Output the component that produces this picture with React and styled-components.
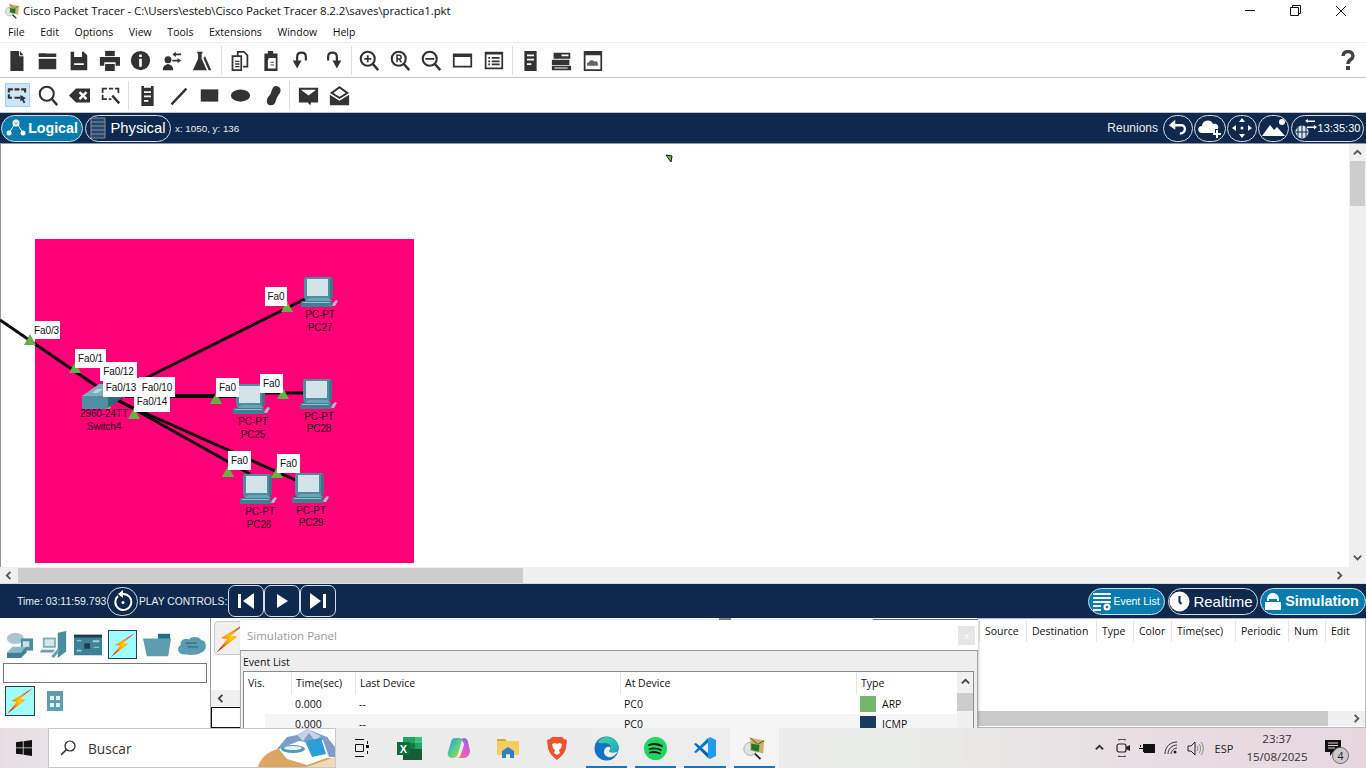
import React from "react";
import styled, { createGlobalStyle } from "styled-components";

const Global = createGlobalStyle`
  html, body { margin: 0; padding: 0; background: #fff; }
  * { box-sizing: border-box; }
  body { font-family: "Open Sans", "Liberation Sans", sans-serif; color: #111; }
`;

const NAVY = "#0e294d";
const BLUE = "#087cae";
const DARK = "#333";

const Window = styled.div`
  width: 1366px; height: 768px; overflow: hidden; display: flex; flex-direction: column; position: relative; background: #fff;
`;
const TitleBar = styled.div`
  height: 21px; display: flex; align-items: center; padding-left: 4px; font-size: 11.5px; position: relative; flex: none;
`;
const TitleText = styled.span` margin-left: 3px; letter-spacing: -0.1px; white-space: nowrap; `;
const WinButtons = styled.div` margin-left: auto; display: flex; height: 21px; align-items: center; padding-right: 2px; `;
const WinButton = styled.div` width: 45.5px; height: 21px; display: flex; align-items: center; justify-content: center; `;
const MenuBar = styled.div`
  height: 22px; flex: none; display: flex; align-items: center; padding: 1px 0 0 8px; gap: 15.6px; font-size: 10.5px; border-bottom: 1px solid #eee;
`;
const Toolbar = styled.div`
  height: 35px; flex: none; display: flex; align-items: center; padding-left: ${p => p.$pad}px; border-bottom: 1px solid #c4c4c4;
`;
const Tool = styled.div` width: 31px; height: 31px; flex: none; display: flex; align-items: center; justify-content: center; `;
const ToolHighlight = styled.div`
  width: 25px; height: 24px; background: #cde6f7; border: 1px solid #99d1ff; display: flex; align-items: center; justify-content: center;
`;
const ToolSep = styled.div` width: 1px; height: 29px; margin: 0 2.5px; background: #ddd; flex: none; `;
const Help = styled.div` margin-left: auto; margin-right: 3px; width: 31px; display: flex; justify-content: center; `;

const NavBar = styled.div`
  height: ${p => p.$h}px; flex: none; background: ${NAVY}; display: flex; align-items: center; color: #fff; position: relative;
  padding-right: ${p => p.$pr || 0}px;
  border-bottom: ${p => p.$line ? "1px solid #8b97a8" : "none"};
`;
const Pill = styled.div`
  height: ${p => p.$h || 27}px; width: ${p => p.$w}px; flex: none; display: flex; align-items: center; justify-content: center; gap: ${p => p.$gap || 0}px;
  border: 1px solid #d6dde6; border-radius: ${p => p.$r || 14}px; background: ${p => p.$on ? BLUE : NAVY};
  margin-left: ${p => p.$ml || 0}px; padding-right: ${p => p.$pr || 0}px; color: #fff; font-size: ${p => p.$fs || 15}px; font-weight: ${p => p.$bold ? 700 : 400};
  font-family: "Liberation Sans", sans-serif; white-space: nowrap;
`;
const SmallText = styled.span`
  font-family: "Liberation Sans", sans-serif; font-size: ${p => p.$fs}px; margin-left: ${p => p.$ml || 0}px; color: #e8edf3; white-space: nowrap; flex: none;
  ${p => p.$w && `width:${p.$w}px;`}
  ${p => p.$auto && "margin-left:auto;"}
`;

const CanvasRow = styled.div` height: 423px; flex: none; display: flex; `;
const Canvas = styled.div` flex: 1; position: relative; overflow: hidden; background: #fff; box-shadow: inset 1px 0 0 #8b97a8; `;
const VBar = styled.div` width: 17px; flex: none; background: #f0f0f0; display: flex; flex-direction: column; align-items: center; padding-top: 4px; `;
const VThumb = styled.div` width: 15px; height: 45px; margin-top: 2px; background: #cdcdcd; flex: none; `;
const VDown = styled.div` margin-top: auto; margin-bottom: 4px; display: flex; `;
const HBar = styled.div` height: 17px; flex: none; background: #f0f0f0; display: flex; align-items: center; padding: 0 21px 0 4px; border-bottom: 1px solid #ddd; `;
const HThumb = styled.div` width: 505px; height: 15px; margin-left: 3px; background: #cdcdcd; `;
const HEnd = styled.div` margin-left: auto; display: flex; `;

const Zone = styled.div.attrs(p => ({ style: { left: p.$x, top: p.$y - 144, width: p.$w, height: p.$h } }))`
  position: absolute; background: #ff0078;
`;
const Layer = styled.svg` position: absolute; left: 0; top: 0; width: 1350px; height: 423px; `;
const Placed = styled.div.attrs(p => ({ style: { left: p.$x, top: p.$y - 144 } }))` position: absolute; display: flex; `;
const PortTag = styled.div.attrs(p => ({ style: { left: p.$x, top: p.$y - 144, width: p.$w, height: p.$h } }))`
  position: absolute; background: #fff; color: #111; font: 10px/1 "Liberation Sans", sans-serif; display: flex; align-items: center; justify-content: center; letter-spacing: -0.1px; padding-top: 1px;
`;
const NodeText = styled.div.attrs(p => ({ style: { left: p.$x, top: p.$y - 144 - 5 } }))`
  position: absolute; transform: translateX(-50%); color: #1e0412; font: 10px/12px "Liberation Sans", sans-serif; white-space: nowrap; letter-spacing: -0.1px;
`;

const Bottom = styled.div` height: 110px; flex: none; display: flex; position: relative; background: #fff; `;
const Palette = styled.div` width: 211px; flex: none; border-right: 1px solid #a0a0a0; padding: 10px 3px 0 3px; display: flex; flex-direction: column; `;
const PaletteRow = styled.div` display: flex; align-items: center; gap: ${p => p.$gap}px; height: ${p => p.$h}px; padding-left: ${p => p.$pl}px; flex: none; `;
const PaletteSearch = styled.div` height: 20px; border: 1px solid #777; margin-top: 2px; width: 204px; flex: none; `;
const BoltBox = styled.div`
  width: ${p => p.$s}px; height: ${p => p.$s}px; background: #9ffcff; border: 1px solid #24424f; display: flex; align-items: center; justify-content: center; flex: none;
`;
const Behind = styled.div` width: 29px; flex: none; position: relative; padding: 3px 0 0 3px; display: flex; flex-direction: column; `;
const BehindTab = styled.div` width: 30px; height: 34px; border: 1px solid #c8c8c8; border-radius: 4px; background: #f0f0f0; display: flex; align-items: center; justify-content: flex-start; overflow: hidden; padding-left: 1px; `;
const BehindScroll = styled.div` height: 18px; background: #f0f0f0; margin: 35px 0 0 -3px; display: flex; align-items: center; padding-left: 5px; `;
const BehindBox = styled.div` height: 21px; border: 1px solid #111; border-right: none; margin-left: -3px; `;
const Scenario = styled.div` flex: 1; position: relative; `;
const Peek = styled.div`
  position: absolute; left: ${p => p.$x}px; top: ${p => p.$y}px; width: ${p => p.$w}px; height: ${p => p.$h}px; background: ${p => p.$c};
`;
const ScenarioHead = styled.div` position: absolute; left: 739px; right: 0; top: 2px; height: 22px; display: flex; font-size: 10.5px; `;
const ScenarioCol = styled.div.attrs(p => ({ style: { width: p.$w } }))` height: 22px; border-left: 1px solid #e6e6e6; padding-left: 5px; line-height: 22px; flex: none; white-space: nowrap; `;
const ScenarioFrame = styled.div` position: absolute; left: 737px; right: 0; top: 0; bottom: 0; border: 1px solid #b8b8b8; border-left: none; `;
const ScenarioScroll = styled.div` position: absolute; left: 738px; right: 1px; bottom: 2px; height: 15px; background: #f0f0f0; display: flex; align-items: center; `;
const ScenarioThumb = styled.div` width: 350px; height: 15px; background: #cacaca; `;
const ScenarioArrow = styled.div` margin-left: auto; margin-right: 3px; display: flex; `;

const SimPanel = styled.div`
  position: absolute; left: 240px; top: 2px; width: 738px; height: 108px; background: #fff; box-shadow: 1px 0 2px rgba(0,0,0,.2); overflow: hidden;
`;
const SimHead = styled.div` height: 31px; display: flex; align-items: center; padding: 0 3px 0 7px; color: #9a9a9a; font-size: 11.5px; border-bottom: 1px solid #9a9a9a; `;
const SimClose = styled.div` margin-left: auto; width: 17px; height: 19px; background: #e6e6e6; color: #fff; font-size: 9px; display: flex; align-items: center; justify-content: center; `;
const EventBody = styled.div` background: #eee; height: 77px; padding: 0 3px 0 2px; border-left: 1px solid #aaa; border-right: 1px solid #aaa; `;
const EventLabel = styled.div` height: 20px; font-size: 10.5px; display: flex; align-items: center; color: #111; padding-top: 2px; `;
const EventTable = styled.div` background: #fff; border: 1px solid #8c8c8c; height: 70px; display: flex; `;
const EventMain = styled.div` flex: 1; display: flex; flex-direction: column; min-width: 0; `;
const EventRow = styled.div`
  display: grid; grid-template-columns: 47px 64px 265px 236px 1fr; height: ${p => p.$h}px; font-size: 10.5px; align-items: center; flex: none;
`;
const HeadCell = styled.div` height: 22px; line-height: 22px; padding-left: 4px; border-left: ${p => p.$first ? "none" : "1px solid #e6e6e6"}; `;
const Cell = styled.div` padding-left: 4px; display: flex; align-items: center; gap: 6px; height: 100%; background: ${p => p.$alt ? "#f5f5f5" : "transparent"}; margin-left: ${p => p.$ml || 0}px; `;
const Swatch = styled.div` width: 16px; height: 16px; background: ${p => p.$c}; flex: none; `;
const EventScroll = styled.div` width: 16px; flex: none; background: #f0f0f0; display: flex; flex-direction: column; align-items: center; padding-top: 5px; `;
const EventThumb = styled.div` width: 16px; height: 18px; background: #cdcdcd; margin-top: 5px; `;

const Taskbar = styled.div`
  height: 40px; flex: none; display: flex; align-items: center; position: relative;
  background: linear-gradient(90deg, #e9dde4 0%, #e6e2e6 3%, #ececec 28%, #eceded 55%, #e9ebe7 66%, #e8dde3 85%, #e6d7df 100%);
`;
const StartBtn = styled.div` width: 48px; height: 40px; display: flex; align-items: center; justify-content: center; flex: none; `;
const SearchBox = styled.div`
  width: 288px; height: 40px; background: #fff; border: 1px solid #c8c8c8; display: flex; align-items: center; padding-left: 11px; font-size: 13.7px; color: #333; gap: 12px; position: relative; overflow: hidden; flex: none;
`;
const SearchArt = styled.svg` position: absolute; right: 0; top: 0; width: 78px; height: 40px; `;
const TaskApps = styled.div` display: flex; height: 40px; `;
const TaskApp = styled.div`
  width: 49.2px; height: 40px; position: relative; display: flex; align-items: center; justify-content: center; flex: none;
  background: ${p => p.$active ? "#f5f5f5" : "transparent"};
  &::after { content: ""; display: ${p => p.$run ? "block" : "none"}; position: absolute; bottom: 0; left: 4px; right: 4px; height: 2px; background: #0c78d0; }
`;
const Tray = styled.div` margin-left: auto; display: flex; align-items: center; height: 40px; color: #222; `;
const TrayIcon = styled.div` width: 24px; display: flex; justify-content: center; `;
const TrayLang = styled.div` font-size: 11px; width: 34px; text-align: center; `;
const Clock = styled.div` width: 72px; text-align: center; font-size: 11.5px; line-height: 18px; color: #333; `;
const Notify = styled.div` width: 53px; height: 40px; position: relative; display: flex; align-items: center; justify-content: center; padding-right: 13px; `;
const NotifyBadge = styled.div`
  position: absolute; left: 19px; top: 19px; width: 17px; height: 17px; border-radius: 50%; background: #cfc9cd; border: 1px solid #666; font-size: 10.5px; display: flex; align-items: center; justify-content: center; color: #222;
`;

const Svg = styled.svg` display: block; flex: none; `;
const I = ({ children, s = 21 }) => <Svg width={s} height={s} viewBox="0 0 24 24" fill={DARK}>{children}</Svg>;
const S = { fill: "none", stroke: DARK, strokeWidth: 2 };

const ICONS = {
  file: <path d="M5 1h10v6h5v17H5zM16 1l4 5h-4z" />,
  folder: <><path d="M2 4h20v4H2zM2 10h20v12H2z" /><path d="M2 4h8v3H2z" /></>,
  save: <path fillRule="evenodd" d="M3 2h15l4 4v17H3zM7 2v6h9V2zM7 15v2h11v-2z" />,
  print: <><path d="M7 1h11v6H7z" /><path d="M1 8h23v10h-5v-4H6v4H1z" /><path d="M7 16h11v8H7z" /></>,
  info: <><circle cx="12" cy="12" r="11" /><path fill="#fff" d="M10.500 5h3v3h-3zM10.500 10h3v9h-3z" /></>,
  person: <><circle cx="8" cy="11" r="4" /><path d="M2 23c0-5 3-6 6-7 3 1 6 2 6 7z" /><path d="M13 5l4-3v2h6v2h-6v2zM23 12l-4-3v2h-6v2h6v2z" /></>,
  flask: <><path d="M6 2h6v2h-1v6l6 13H1l6-13V4H6z" /><path d="M15 7l7 16h-3L13 9z" /></>,
  copy: <><path {...S} d="M4 7h10v16H4zM10 6V2h7l4 4v13h-5" /><path stroke={DARK} strokeWidth="1.500" d="M7 13h5M7 16h5M7 19h5" /></>,
  paste: <><path d="M5 4h4V1h6v3h5v20H5z" /><path fill="#fff" d="M10 9h8v12h-9v-9z" /><path stroke={DARK} d="M12 14h4M12 17h4" /></>,
  undo: <><path {...S} strokeWidth="2.500" d="M7 13V8c0-3 2-5 5-5s5 2 5 5v4" /><path d="M2 12h10l-5 9z" /></>,
  redo: <><path {...S} strokeWidth="2.500" d="M17 13V8c0-3-2-5-5-5s-5 2-5 5v4" /><path d="M12 12h10l-5 9z" /></>,
  zoomIn: <><circle {...S} strokeWidth="2.400" cx="10" cy="10" r="8" /><path d="M6 9h3V6h2v3h3v2h-3v3H9v-3H6zM15 17l2-2 6 7-2 2z" /></>,
  zoomR: <><circle {...S} strokeWidth="2.400" cx="10" cy="10" r="8" /><path d="M15 17l2-2 6 7-2 2z" /><path {...S} strokeWidth="1.700" d="M8 14V6h2.500a2 2 0 0 1 0 4.400H8M10.500 10.400l2.500 3.600" /></>,
  zoomOut: <><circle {...S} strokeWidth="2.400" cx="10" cy="10" r="8" /><path d="M5 9h10v2H5zM15 17l2-2 6 7-2 2z" /></>,
  win: <path fillRule="evenodd" d="M1 4h22v16H1zM3 8v10h18V8z" />,
  list: <path fillRule="evenodd" d="M2 2h21v20H2zM4 5v15h17V5zM6 8h2v2H6zM10 8h9v2h-9zM6 12h2v2H6zM10 12h9v2h-9zM6 15.500h2v2H6zM10 15.500h9v2h-9z" />,
  doc: <path fillRule="evenodd" d="M5 1h14v23H5zM8 5v2h8V5zM8 10v2h8v-2zM8 15v2h5v-2z" />,
  rack: <path fillRule="evenodd" d="M3 3h19v7H3zM12 5v2h8V5zM1 11h20v6H1zM1 18h22v5H1zM4 20v1h15v-1z" />,
  cloudWin: <><path fillRule="evenodd" d="M2 1h21v23H2zM4 6v16h17V6z" /><path fill="#666" d="M7 18c-2 0-2-4 1-4 0-3 5-3 6-1 3-1 5 1 4 5z" /></>,
  select: <><path d="M1 4h6v2.500H3.500V9H1zM9 4h6v2.500H9zM17 4h6v5h-2.500V6.500H17zM1 11h2.500v3H6v2.500H1zM9 14h7v2.500H9z" /><path d="M16 12l7 4-3 1 2 4-2 1-2-4-2 2z" fill="#234" /></>,
  mag: <><circle {...S} strokeWidth="2.400" cx="10" cy="10" r="8" /><path d="M15 17l2-2 6 7-2 2z" /></>,
  del: <path fillRule="evenodd" d="M8 4h16v16H8L0 12zM11 9l3 3-3 3 2 2 3-3 3 3 2-2-3-3 3-3-2-2-3 3-3-3z" />,
  resize: <path d="M2 3h6v2H4v4H2zM10 3h5v2h-5zM17 3h5v6h-2V5h-3zM2 11h2v4h4v2H2zM10 15h3v2h-3zM15 11l8 9-2 2-8-9z" />,
  note: <path fillRule="evenodd" d="M5 1h3v2h8V1h3v23H5zM8 7v2h8V7zM8 12v2h8v-2zM8 17v2h5v-2z" />,
  line: <path d="M3 21l17-18 2 2L5 23z" />,
  rect: <path d="M2 5h20v14H2z" />,
  ellipse: <ellipse cx="12" cy="12" rx="11" ry="7" />,
  blob: <path d="M17 1c5 0 7 5 4 9-2 3-3 4-4 8-1 4-4 6-7 5-4-1-4-6-2-9 2-3 3-3 4-7 1-4 3-6 5-6z" />,
  mail: <path d="M1 3h22v17h-8l-1 3-3-3H1zM4 6l8 6 8-6v-.500H4z" fillRule="evenodd" />,
  mailOpen: <><path d="M12 1l11 8L12 16 1 9zM1 11l11 7 11-7v12H1z" /><path fill="#fff" d="M5 9l7-5 7 5-7 4.500z" /></>,
};
const ROW1 = [["file","folder","save","print","info","person","flask"],["copy","paste","undo","redo"],["zoomIn","zoomR","zoomOut","win","list"],["doc","rack","cloudWin"]];
const ROW2 = [["select","mag","del","resize"],["note","line","rect","ellipse","blob"],["mail","mailOpen"]];

const ToolGroup = ({ groups }) => groups.map((g, i) => (
  <React.Fragment key={i}>
    {i > 0 && <ToolSep />}
    {g.map(n => (
      <Tool key={n}>
        {n === "select" ? <ToolHighlight><I s={20}>{ICONS[n]}</I></ToolHighlight> : <I>{ICONS[n]}</I>}
      </Tool>
    ))}
  </React.Fragment>
));

const W = { fill: "#fff" };
const WS = { fill: "none", stroke: "#fff", strokeWidth: 2 };
const BoltSvg = styled.svg` flex: none; display: block; `;
const Bolt = ({ s = 22, id }) => (
  <BoltSvg width={s} height={s} viewBox="0 0 24 24">
    <defs>
      <radialGradient id={id}>
        <stop offset="0" stopColor="#ffd400" />
        <stop offset=".5" stopColor="#ff8a00" />
        <stop offset="1" stopColor="#e81c10" />
      </radialGradient>
    </defs>
    <path fill={`url(#${id})`} d="M24 0L12 10l5 1L0 24l9-11-5-1z" />
  </BoltSvg>
);

const PC = () => (
  <svg width="38" height="31" viewBox="0 0 38 31">
    <path fill="#4f8c9f" d="M5 1h26l2 2v18l-3 3H5l-1-3V3z" />
    <path fill="#3b7687" d="M30 2l3 1v18l-3 3z" />
    <path fill="#d4e3ea" d="M7 3h21v17H7z" />
    <path fill="#6aa4b4" d="M10 22h18l4 3H5z" />
    <path fill="#3f7f90" d="M1 25h31v6H1z" />
    <path fill="#8cc0ce" d="M3 26h27v1H3z" />
    <path fill="#9cc3cc" d="M33 27l3-3 2 1-3 5h-3z" />
  </svg>
);
const SwitchIcon = () => (
  <svg width="44" height="26" viewBox="0 0 44 26">
    <path fill="#7db0bf" d="M0 12L17 0h25L26 13z" />
    <path fill="#4f8ea3" d="M0 12h26v13H0z" />
    <path fill="#2d6a7e" d="M26 13l16-13v12L26 25z" />
    <path fill="#b8d3db" d="M10 9l5-4h6l-5 4zM22 6l3-2h6l-3 2z" />
    <path fill="#a8d030" d="M24 25l4 0 1-3z" />
  </svg>
);

const LINES = [
  [0, 176, 108, 250, 3], [108, 250, 122, 254, 3], [138, 238, 305, 155, 3], [125, 252, 240, 252, 4],
  [262, 249, 305, 249, 3], [116, 255, 250, 330, 3], [118, 257, 300, 338, 3],
];
const TRIS = [[30,340],[75,368],[287,307],[216,399],[283,394],[134,414],[228,472],[277,473]];
const TAGS = [
  [33,321,27,18,"Fa0/3"],[75,349,31,19,"Fa0/1"],[100,362,37,19,"Fa0/12"],[103,378,36,19,"Fa0/13"],[139,377,36,20,"Fa0/10"],
  [134,391,36,21,"Fa0/14"],[265,287,22,19,"Fa0"],[216,378,23,19,"Fa0"],[260,374,23,19,"Fa0"],[228,451,23,19,"Fa0"],[277,454,23,19,"Fa0"],
];
const PCS = [[300,276],[232,383],[299,378],[239,473],[291,472]];
const NAMES = [
  [320,314,"PC-PT"],[320,327,"PC27"],[253,421,"PC-PT"],[253,434,"PC25"],[319,416,"PC-PT"],[319,428,"PC28"],
  [260,511,"PC-PT"],[259,524,"PC26"],[311,510,"PC-PT"],[311,522,"PC29"],[104,413,"2960-24TT"],[104,426,"Switch4"],
];

const Chevron = ({ d = "up", c = "#555" }) => {
  const p = { up: "M2 7l4-4 4 4", down: "M2 4l4 4 4-4", left: "M7 2L3 6l4 4", right: "M4 2l4 4-4 4" }[d];
  return <svg width="11" height="11" viewBox="0 0 12 12"><path d={p} fill="none" stroke={c} strokeWidth="2" /></svg>;
};

const Router = () => (
  <svg width="30" height="30" viewBox="0 0 30 30">
    <ellipse cx="10" cy="8" rx="9" ry="6" fill="#a9c6d0" />
    <path fill="#4a8ca0" d="M16 8h13v13H16z" />
    <path fill="#8ab8c6" d="M7 17h15l-6 6H1z" />
    <path fill="#3f8096" d="M1 23h15v6H1zM16 23l6-6v6l-6 6z" />
    <path fill="#cfe0e6" d="M18 11h7v6h-7z" />
  </svg>
);
const Computer = () => (
  <svg width="30" height="30" viewBox="0 0 30 30">
    <path fill="#4a8ca0" d="M19 2l9-2v22l-9 7z" />
    <path fill="#7fb0bf" d="M3 7h14v11H3z" />
    <path fill="#d8e6ea" d="M5 9h10v7H5z" />
    <path fill="#6aa0b0" d="M1 20h15l-2 3H0zM12 27l7-8 2 2-6 8z" />
  </svg>
);
const Board = () => (
  <svg width="30" height="22" viewBox="0 0 30 22">
    <path fill="#3d8296" d="M0 0h30v22H0z" />
    <path fill="#1e3d48" d="M0 0h30v3H0zM11 9h6v6h-6z" />
    <path fill="#a9d0da" d="M3 6h5v1H3zM20 6h7v2h-7zM21 13h6v1h-6zM3 16h5v2H3z" />
  </svg>
);
const FolderDev = () => (
  <svg width="30" height="24" viewBox="0 0 30 24"><path fill="#1f6f86" d="M16 0h13v8H16z" /><path fill="#5f9db0" d="M0 5h30l-3 19H4z" /></svg>
);
const CloudDev = () => (
  <svg width="32" height="22" viewBox="0 0 32 22">
    <path fill="#5a9cb1" d="M7 21C1 21-1 13 4 11 3 5 10 3 13 5c3-4 11-3 13 1 6 0 7 11 0 13-4 3-14 3-19 2z" />
    <path stroke="#3a7a8e" strokeWidth="2" d="M9 9h12M11 13h12" />
  </svg>
);
const Tile = () => (
  <svg width="18" height="20" viewBox="0 0 18 20"><path fill="#5d9eb4" d="M1 0h16v20H1z" /><path fill="#e4f0f3" d="M4 5h4v4H4zM10 5h4v4h-4zM4 12h4v4H4zM10 12h4v4h-4z" /></svg>
);
const PtIcon = ({ s = 26 }) => (
  <svg width={s} height={s} viewBox="0 0 26 26">
    <circle cx="9" cy="14" r="7" fill="#dfe6df" stroke="#aaa" />
    <path fill="#c8b26a" d="M9 2l15 3-1 14-14-3z" />
    <path fill="#1d7a2a" d="M10 8l9 2-1 7-8-2z" />
    <path stroke="#5a4a20" fill="none" d="M9 2l8 7 7-4" />
    <path stroke="#222" strokeWidth="2" d="M14 19l6 6" />
  </svg>
);

const Columns = ["Vis.", "Time(sec)", "Last Device", "At Device", "Type"];
const SCEN = [["Source",47],["Destination",70],["Type",37],["Color",38],["Time(sec)",64],["Periodic",53],["Num",37],["Edit",40]];

export default function App() {
  return (
    <Window>
      <Global />
      <TitleBar>
        <PtIcon s={16} />
        <TitleText>Cisco Packet Tracer - C:\Users\esteb\Cisco Packet Tracer 8.2.2\saves\practica1.pkt</TitleText>
        <WinButtons>
          <WinButton><svg width="11" height="11"><path d="M0 5.500h10" stroke="#111" /></svg></WinButton>
          <WinButton><svg width="11" height="11"><path d="M.5 2.500h8v8h-8zM2.500 2.500v-2h8v8h-2" fill="none" stroke="#111" /></svg></WinButton>
          <WinButton><svg width="12" height="12"><path d="M1 1l10 10M11 1L1 11" stroke="#111" /></svg></WinButton>
        </WinButtons>
      </TitleBar>
      <MenuBar>
        {["File","Edit","Options","View","Tools","Extensions","Window","Help"].map(m => <span key={m}>{m}</span>)}
      </MenuBar>
      <Toolbar $pad={1}>
        <ToolGroup groups={ROW1} />
        <Help>
          <svg width="14" height="20" viewBox="0 0 14 20"><path fill="none" stroke="#444" strokeWidth="3.400" d="M2 6c0-6 10-6 10 0 0 4-5 3-5 8" /><path fill="#444" d="M5 16h4v4H5z" /></svg>
        </Help>
      </Toolbar>
      <Toolbar $pad={1.5}>
        <ToolGroup groups={ROW2} />
      </Toolbar>
      <NavBar $h={31} $line $pr={2}>
        <Pill $w={82} $on $bold $gap={2} $ml={1} $fs={14.200}>
          <svg width="20" height="20" viewBox="0 0 20 20"><path d="M3 15l7-11 7 11" fill="none" stroke="#fff" /><circle cx="10" cy="5" r="2.500" {...WS} /><circle cx="3" cy="15" r="2.500" {...W} /><circle cx="17" cy="15" r="2.500" {...W} /></svg>
          Logical
        </Pill>
        <Pill $w={86} $ml={2} $gap={4} $fs={14.800}>
          <svg width="16" height="22" viewBox="0 0 16 22"><path d="M1 1h14v20H1zM1 5h14M1 9h14M1 13h14M1 17h14" fill="#2a4467" stroke="#7f90a8" /></svg>
          Physical
        </Pill>
        <SmallText $fs={9.800} $ml={4}>x: 1050, y: 136</SmallText>
        <SmallText $fs={12} $auto>Reunions</SmallText>
        <Pill $w={30} $ml={5}><svg width="22" height="22" viewBox="0 0 24 24"><path {...WS} strokeWidth="2.500" d="M6 9h10c5 0 5 9-2 9" /><path {...W} d="M9 3v11L2 9z" /></svg></Pill>
        <Pill $w={32} $ml={1}><svg width="26" height="22" viewBox="0 0 26 22"><path {...W} d="M5 16C0 16 0 9 5 9c0-6 9-8 11-2 4-1 6 2 5 5h-3v4z" /><path {...W} d="M19 13h2v3h3v2h-3v3h-2v-3h-3v-2h3z" /></svg></Pill>
        <Pill $w={30} $ml={1}><svg width="22" height="22" viewBox="0 0 22 22"><path {...W} d="M11 1l3 4H8zM11 21l-3-4h6zM1 11l4-3v6zM21 11l-4 3V8z" /><circle cx="11" cy="11" r="1.500" {...W} /></svg></Pill>
        <Pill $w={31} $ml={1}><svg width="24" height="20" viewBox="0 0 24 20"><path {...W} d="M0 18l8-11 4 5 3-3 8 9z" /><circle cx="20" cy="4" r="3" {...W} /></svg></Pill>
        <Pill $w={73} $ml={2} $fs={11} $gap={1}>
          <svg width="22" height="24" viewBox="0 0 22 24"><circle cx="7" cy="16" r="6.500" fill="#dde5ec" /><path stroke="#0e294d" d="M1 16h12M7 9v13M3 11v10M11 11v10" /><path {...W} d="M10 5l3-2v1.500h7v1.500h-7V7zM22 11l-3-2v1.500h-7V12h7v1.500z" /></svg>
          13:35:30
        </Pill>
      </NavBar>
      <CanvasRow>
        <Canvas>
          <Zone $x={35} $y={239} $w={379} $h={324} />
          <Layer viewBox="0 0 1350 423">
            {LINES.map(([a, b, c, d, w], i) => <line key={i} x1={a} y1={b} x2={c} y2={d} stroke="#0a0a0a" strokeWidth={w} />)}
            <path d="M666 11l6 1-1 6z" fill="#7cc31f" stroke="#111" />
          </Layer>
          {PCS.map(([x, y], i) => <Placed key={i} $x={x} $y={y}><PC /></Placed>)}
          <Placed $x={82} $y={384}><SwitchIcon /></Placed>
          <Layer viewBox="0 0 1350 423">
            {TRIS.map(([x, y], i) => <path key={i} d={`M${x} ${y - 144 - 6}l6 11h-12z`} fill="#65b345" />)}
          </Layer>
          {TAGS.map(([x, y, w, h, t], i) => <PortTag key={i} $x={x} $y={y} $w={w} $h={h}>{t}</PortTag>)}
          {NAMES.map(([x, y, t], i) => <NodeText key={i} $x={x} $y={y}>{t}</NodeText>)}
        </Canvas>
        <VBar>
          <Chevron d="up" />
          <VThumb />
          <VDown><Chevron d="down" /></VDown>
        </VBar>
      </CanvasRow>
      <HBar>
        <Chevron d="left" />
        <HThumb />
        <HEnd><Chevron d="right" /></HEnd>
      </HBar>
      <NavBar $h={34}>
        <SmallText $fs={10.500} $ml={17} $w={89}>Time: 03:11:59.793</SmallText>
        <Pill $w={31} $h={29} $r={15} $ml={1}>
          <svg width="22" height="22" viewBox="0 0 22 22"><path {...WS} d="M6 6a8 8 0 1 0 5-2" /><path {...W} d="M11 0v8L6 4z" /><circle cx="11" cy="12.500" r="1.500" {...W} /></svg>
        </Pill>
        <SmallText $fs={10.300} $ml={1} $w={88}>PLAY CONTROLS:</SmallText>
        <Pill $w={36} $h={32} $r={7} $ml={1}><svg width="20" height="18" viewBox="0 0 20 18"><path {...W} d="M2 2h3v14H2zM18 1v16L7 9z" /></svg></Pill>
        <Pill $w={36} $h={32} $r={7}><svg width="16" height="18" viewBox="0 0 16 18"><path {...W} d="M3 2l11 7-11 7z" /></svg></Pill>
        <Pill $w={36} $h={32} $r={7}><svg width="20" height="18" viewBox="0 0 20 18"><path {...W} d="M15 2h3v14h-3zM2 1v16l11-8z" /></svg></Pill>
        <Pill $w={77} $h={27} $on $ml={752} $fs={10.500} $gap={2}>
          <svg width="18" height="20" viewBox="0 0 18 20"><path {...W} d="M0 2h18v2H0zM0 6h18v2H0zM0 10h18v2H0zM0 14h8v2H0zM0 18h8v2H0z" /><circle cx="14" cy="16" r="3.500" {...W} /><circle cx="14" cy="16" r="1.300" fill={BLUE} /></svg>
          Event List
        </Pill>
        <Pill $w={90} $h={27} $ml={3} $fs={15} $gap={3} $pr={4}>
          <svg width="21" height="21" viewBox="0 0 21 21"><circle cx="10.500" cy="10.500" r="10" {...W} /><path d="M10.500 5v6l2 2" fill="none" stroke={NAVY} strokeWidth="2" /></svg>
          Realtime
        </Pill>
        <Pill $w={106} $h={27} $on $bold $ml={2} $fs={14.400} $gap={1} $pr={5}>
          <svg width="22" height="22" viewBox="0 0 22 22"><path {...W} d="M5 9a6 6 0 0 1 12 0v2H5zM3 12h16v8H3z" /><path fill={BLUE} d="M7 9h8v3H7zM5 20h2v2H5zM10 20h2v2h-2zM15 20h2v2h-2z" /></svg>
          Simulation
        </Pill>
      </NavBar>
      <Bottom>
        <Palette>
          <PaletteRow $h={33} $gap={6} $pl={3}>
            <Router /><Computer /><Board /><BoltBox $s={29}><Bolt s={24} id="b1" /></BoltBox><FolderDev /><CloudDev />
          </PaletteRow>
          <PaletteSearch />
          <PaletteRow $h={35} $gap={11} $pl={2}>
            <BoltBox $s={30}><Bolt s={26} id="b2" /></BoltBox><Tile />
          </PaletteRow>
        </Palette>
        <Behind>
          <BehindTab><Bolt s={30} id="b3" /></BehindTab>
          <BehindScroll><Chevron d="left" c="#444" /></BehindScroll>
          <BehindBox />
        </Behind>
        <Scenario>
          <ScenarioFrame />
          <Peek $x={479} $y={0} $w={12} $h={2} $c="#888" />
          <Peek $x={633} $y={1} $w={105} $h={1} $c="#777" />
          <ScenarioHead>
            {SCEN.map(([t, w]) => <ScenarioCol key={t} $w={w}>{t}</ScenarioCol>)}
          </ScenarioHead>
          <ScenarioScroll>
            <ScenarioThumb />
            <ScenarioArrow><Chevron d="right" /></ScenarioArrow>
          </ScenarioScroll>
        </Scenario>
        <SimPanel>
          <SimHead>Simulation Panel<SimClose>x</SimClose></SimHead>
          <EventBody>
            <EventLabel>Event List</EventLabel>
            <EventTable>
              <EventMain>
                <EventRow $h={22}>
                  {Columns.map((c, i) => <HeadCell key={c} $first={i === 0}>{c}</HeadCell>)}
                </EventRow>
                <EventRow $h={20}>
                  <Cell /><Cell>0.000</Cell><Cell>--</Cell><Cell>PC0</Cell><Cell><Swatch $c="#76b66b" />ARP</Cell>
                </EventRow>
                <EventRow $h={19}>
                  <Cell $ml={21} $alt /><Cell $alt>0.000</Cell><Cell $alt>--</Cell><Cell $alt>PC0</Cell><Cell $alt><Swatch $c="#1b3a5e" />ICMP</Cell>
                </EventRow>
              </EventMain>
              <EventScroll>
                <Chevron d="up" c="#444" />
                <EventThumb />
              </EventScroll>
            </EventTable>
          </EventBody>
        </SimPanel>
      </Bottom>
      <Taskbar>
        <StartBtn>
          <svg width="16" height="16" viewBox="0 0 16 16"><path fill="#111" d="M0 2.300l6.800-1V7.500H0zM7.600 1.200L16 0v7.500H7.600zM0 8.300h6.800v6.300L0 13.700zM7.600 8.300H16V16l-8.400-1.200z" /></svg>
        </StartBtn>
        <SearchBox>
          <svg width="16" height="16" viewBox="0 0 16 16"><circle cx="10" cy="6" r="5" fill="none" stroke="#222" strokeWidth="1.200" /><path d="M6.500 9.500L1 15" stroke="#222" strokeWidth="1.400" /></svg>
          Buscar
          <SearchArt viewBox="0 0 78 40">
            <path fill="#7f9cc8" d="M20 20L30 8l10-2 10-6 10 4 10 4 8 10v10H22z" />
            <path fill="#c5d3e6" d="M40 6l6 6 6-8 6 8 6-5-14-7z" />
            <path fill="#dca561" d="M0 40C3 30 10 22 22 20c14-2 34 6 56 10v10z" />
            <path fill="#f0d9b8" d="M44 40l34-12v12z" />
            <path fill="#fff" d="M22 20l20-8 12 2 12-3 6 17-22 8-20-6z" />
            <path fill="#2a9fd8" d="M48 12l16-3 5 16-14 3z" />
            <ellipse cx="36" cy="20" rx="12" ry="4" fill="#4fa0b4" />
            <ellipse cx="36" cy="19" rx="9" ry="2" fill="#e6f2f5" />
          </SearchArt>
        </SearchBox>
        <TaskApps>
          <TaskApp>
            <svg width="18" height="18" viewBox="0 0 18 18"><path fill="none" stroke="#111" d="M3 .500h9M3 17.500h9M3.500 5.500h8v7h-8z" /><path fill="#111" d="M14 6h3v3h-3zM15 12h1v3h-1zM15 2h1v3h-1z" /></svg>
          </TaskApp>
          <TaskApp>
            <svg width="25" height="23" viewBox="0 0 25 23">
              <path fill="#21a366" d="M6 0h12v6H6z" /><path fill="#33c481" d="M18 0h7v6h-7z" /><path fill="#107c41" d="M6 6h12v6H6z" /><path fill="#21a366" d="M18 6h7v6h-7z" /><path fill="#185c37" d="M6 12h19v11H6z" />
              <path fill="#0f6b3a" d="M0 5h13v13H0z" />
              <text x="6.500" y="15.500" fill="#fff" fontSize="11" fontWeight="700" textAnchor="middle" fontFamily="Liberation Sans">X</text>
            </svg>
          </TaskApp>
          <TaskApp>
            <svg width="24" height="24" viewBox="0 0 24 24">
              <defs>
                <linearGradient id="cpa" x1="0" y1="0" x2="1" y2="1"><stop offset="0" stopColor="#1a9de0" /><stop offset=".55" stopColor="#5cd08a" /><stop offset="1" stopColor="#f2c230" /></linearGradient>
                <linearGradient id="cpb" x1="1" y1="0" x2="0" y2="1"><stop offset="0" stopColor="#7a6cf0" /><stop offset=".5" stopColor="#e05cc8" /><stop offset="1" stopColor="#f58a3a" /></linearGradient>
              </defs>
              <path fill="url(#cpa)" d="M8 2h5c1 0 2 1 2 2l-4 14c-1 3-3 4-6 4-3 0-5-3-4-6l3-10c0-2 2-4 4-4z" />
              <path fill="url(#cpb)" d="M14 4c0 0 1-2 3-2 2 0 4 2 4 4l2 9c0 4-3 7-6 7H9c3 0 4-1 5-4l3-9c0-2-1-4-3-5z" />
            </svg>
          </TaskApp>
          <TaskApp>
            <svg width="22" height="20" viewBox="0 0 22 20"><path fill="#d9a62e" d="M0 1h8l2 2H0z" /><path fill="#f4cf5e" d="M0 3h22v14H0z" /><path fill="#2d7fc9" d="M5 20v-7l6-4 6 4v7h-4v-4H9v4z" /></svg>
          </TaskApp>
          <TaskApp>
            <svg width="20" height="24" viewBox="0 0 20 24"><path fill="#f1522a" d="M5 1h10l2 2 3 1-1 8c-1 5-5 9-9 12-4-3-8-7-9-12L0 4l3-1z" /><path fill="#fff" d="M5 8l3-1 2 1 2-1 3 1-1 4-2 2 1 3-3 2-3-2 1-3-2-2z" /></svg>
          </TaskApp>
          <TaskApp $run>
            <svg width="25" height="25" viewBox="0 0 25 25">
              <defs><linearGradient id="ed" x1="0" y1="0" x2="1" y2="1"><stop offset="0" stopColor="#3ddb8e" /><stop offset="1" stopColor="#1fa8c8" /></linearGradient></defs>
              <circle cx="12.500" cy="12.500" r="12" fill="#1272c8" />
              <path fill="url(#ed)" d="M4 6C8-1 22-2 25 11c0 4-3 5-6 5s-3-1-3-2c2-2 1-6-4-7-4 0-7 1-8-1z" />
              <path fill="#eceded" d="M10 16c0-4 3-6 6-5 1 2 0 3-1 4 1 2 6 2 9 0-2 4-6 7-10 6-3-1-4-3-4-5z" />
            </svg>
          </TaskApp>
          <TaskApp $run>
            <svg width="23" height="23" viewBox="0 0 23 23"><circle cx="11.500" cy="11.500" r="11.500" fill="#1ed760" /><path d="M5 8c4-1.500 9-1 13 1M5.500 12c4-1 8-.5 11.500 1M6 15.500c3-.8 7-.5 10 1" fill="none" stroke="#111" strokeWidth="1.800" strokeLinecap="round" /></svg>
          </TaskApp>
          <TaskApp $run>
            <svg width="24" height="24" viewBox="0 0 24 24"><path fill="#0065a9" d="M1 8l2-1 14 12-2 3z" /><path fill="#007acc" d="M1 16l2 1L17 5l-2-3z" /><path fill="#1f9cf0" d="M17 1l6 3v16l-6 3 -2-1V3z" /></svg>
          </TaskApp>
          <TaskApp $run $active><PtIcon s={24} /></TaskApp>
        </TaskApps>
        <Tray>
          <TrayIcon><Chevron d="up" c="#333" /></TrayIcon>
          <TrayIcon><svg width="14" height="18" viewBox="0 0 14 18"><path d="M2 1c3-1 5-1 8 0M2 17c3 1 5 1 8 0" fill="none" stroke="#333" /><rect x="1" y="5" width="9" height="8" rx="2" fill="none" stroke="#222" strokeWidth="1.200" /><path fill="#222" d="M10 8l4-2v6l-4-2z" /></svg></TrayIcon>
          <TrayIcon><svg width="17" height="12" viewBox="0 0 17 12"><path fill="#111" d="M5 2h11v9H5z" /><path fill="#111" d="M0 6h4V2h1v8H4V7H0zM1 3h1v2H1z" /></svg></TrayIcon>
          <TrayIcon><svg width="14" height="14" viewBox="0 0 14 14"><path fill="none" stroke="#333" d="M1 13C1 6 6 1 13 1M4 13c0-5 4-9 9-9M7 13c0-3 3-6 6-6" /><circle cx="11" cy="11" r="1.500" fill="#222" /></svg></TrayIcon>
          <TrayIcon><svg width="17" height="15" viewBox="0 0 17 15"><path fill="none" stroke="#222" d="M1 5h3l4-4v13l-4-4H1z" /><path fill="none" stroke="#888" d="M10 5c1 1 1 4 0 5M12 3c2 2 2 7 0 9M14 1c3 3 3 10 0 13" /></svg></TrayIcon>
          <TrayLang>ESP</TrayLang>
          <Clock>23:37<br />15/08/2025</Clock>
          <Notify>
            <svg width="16" height="17" viewBox="0 0 16 17"><path fill="#111" d="M0 0h16v12H8l-3 4v-4H0z" /><path stroke="#e8d8df" d="M3 3h10M3 5.500h10M3 8h7" /></svg>
            <NotifyBadge>4</NotifyBadge>
          </Notify>
        </Tray>
      </Taskbar>
    </Window>
  );
}
